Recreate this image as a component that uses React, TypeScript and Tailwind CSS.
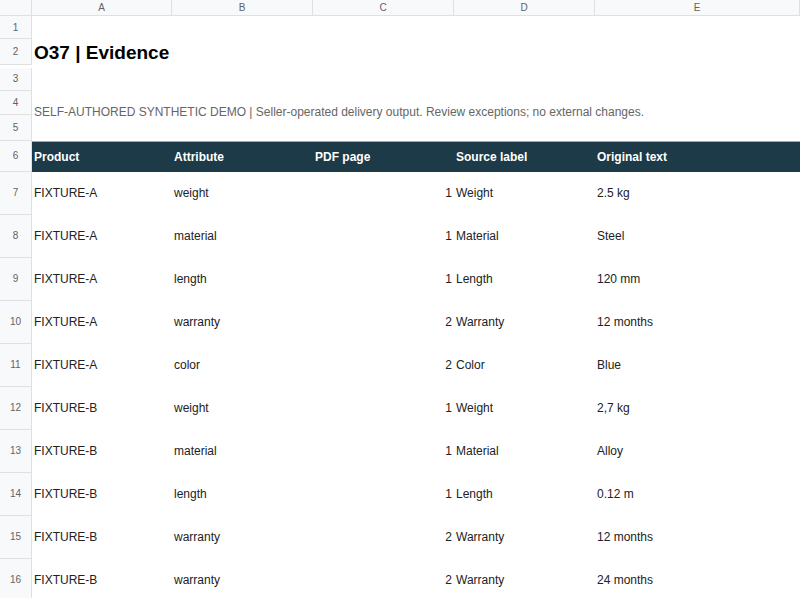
const ROWS: string[][] = [
  ["FIXTURE-A", "weight", "1", "Weight", "2.5 kg"],
  ["FIXTURE-A", "material", "1", "Material", "Steel"],
  ["FIXTURE-A", "length", "1", "Length", "120 mm"],
  ["FIXTURE-A", "warranty", "2", "Warranty", "12 months"],
  ["FIXTURE-A", "color", "2", "Color", "Blue"],
  ["FIXTURE-B", "weight", "1", "Weight", "2,7 kg"],
  ["FIXTURE-B", "material", "1", "Material", "Alloy"],
  ["FIXTURE-B", "length", "1", "Length", "0.12 m"],
  ["FIXTURE-B", "warranty", "2", "Warranty", "12 months"],
  ["FIXTURE-B", "warranty", "2", "Warranty", "24 months"],
];

const COLS = ["A", "B", "C", "D", "E"];
const GRID = "grid grid-cols-[32px_140px_141px_141px_141px_205px]";

function RowNum({ n, h }: { n: number; h: string }) {
  return (
    <div className={`${h} flex items-center justify-center border-b border-r border-[#e0e0e0] bg-[#f8f9fa] text-[10px] text-[#5f6368]`}>
      {n}
    </div>
  );
}

export default function App() {
  return (
    <div className="h-[598px] w-[800px] overflow-hidden bg-white text-[12px] text-[#222]" style={{ fontFamily: "Arial, 'Liberation Sans', sans-serif" }}>
      <div className={`${GRID} h-[16px] border-b border-[#e0e0e0] bg-[#f8f9fa] text-[10px] text-[#5f6368]`}>
        <div className="border-r border-[#e0e0e0]" />
        {COLS.map((c) => (
          <div key={c} className="flex items-center justify-center border-r border-[#e0e0e0]">{c}</div>
        ))}
      </div>

      <div className={GRID}>
        <RowNum n={1} h="h-[23px]" />
        <div className="col-span-5" />
        <RowNum n={2} h="h-[26px]" />
        <div className="col-span-5 flex items-center px-[2px] text-[19px] font-bold text-black">O37 | Evidence</div>
        <RowNum n={3} h="h-[23px]" />
        <div className="col-span-5" />
        <RowNum n={4} h="h-[24px]" />
        <div className="col-span-5 flex items-end px-[2px] pb-[0px] text-[12px] text-[#666] translate-y-[6px]">
          SELF-AUTHORED SYNTHETIC DEMO | Seller-operated delivery output. Review exceptions; no external changes.
        </div>
        <RowNum n={5} h="h-[26px]" />
        <div className="col-span-5" />
        <RowNum n={6} h="h-[31px]" />
        <div className="col-span-5 grid grid-cols-[140px_141px_141px_141px_205px] items-center bg-[#1c3a47] text-[12px] font-bold text-white border-t border-[#8fb3a8]">
          <div className="px-[2px]">Product</div>
          <div className="px-[2px]">Attribute</div>
          <div className="px-[2px]">PDF page</div>
          <div className="px-[2px]">Source label</div>
          <div className="px-[2px]">Original text</div>
        </div>
        {ROWS.map((r, i) => (
          <div key={i} className="contents">
            <RowNum n={i + 7} h="h-[43px]" />
            <div className="flex items-center px-[2px]">{r[0]}</div>
            <div className="flex items-center px-[2px]">{r[1]}</div>
            <div className="flex items-center justify-end px-[2px]">{r[2]}</div>
            <div className="flex items-center px-[2px]">{r[3]}</div>
            <div className="flex items-center px-[2px]">{r[4]}</div>
          </div>
        ))}
      </div>
    </div>
  );
}
